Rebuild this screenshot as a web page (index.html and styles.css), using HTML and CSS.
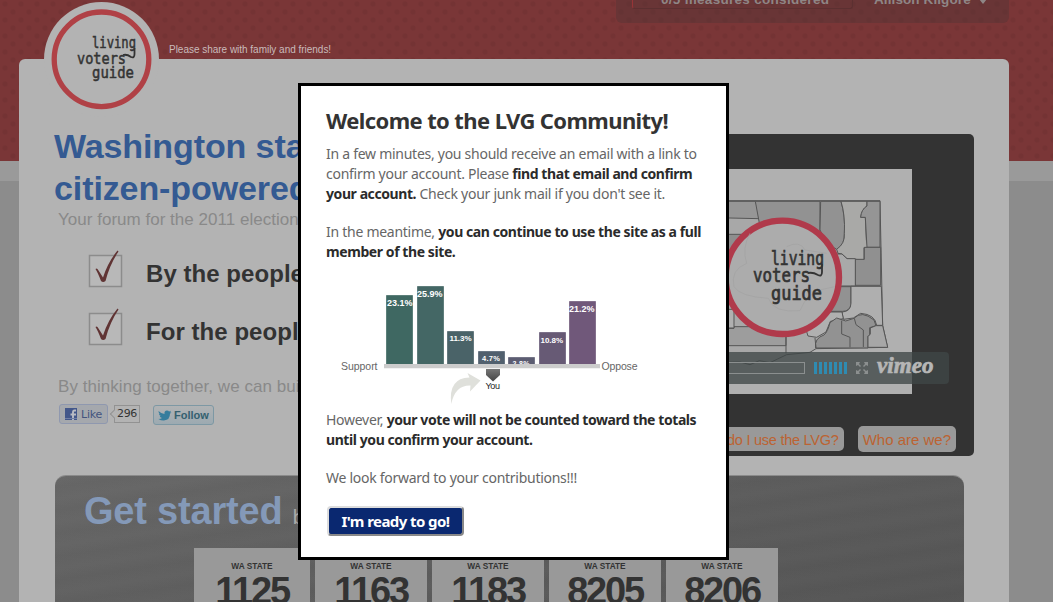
FILE: index.html
```
<!DOCTYPE html>
<html lang="en">
<head>
<meta charset="utf-8">
<title>Living Voters Guide</title>
<link rel="stylesheet" href="styles.css">
</head>
<body>
<div class="page">
  <header class="top">
    <p class="share">Please share with family and friends!</p>
    <div class="account">
      <span class="progress">0/5 measures considered</span>
      <span class="user">Allison Kilgore<svg width="8" height="6" viewBox="0 0 8 6"><path d="M0 0h8L4 5z" fill="#8f8686"/></svg></span>
    </div>
  </header>

  <main class="sheet">
    <div class="intro">
      <section class="pitch">
        <h1>Washington state's<br>citizen-powered guide</h1>
        <p class="sub">Your forum for the 2011 elections</p>
        <ul class="points">
          <li><svg width="36" height="40" viewBox="0 0 36 40"><path d="M1.500 6.500h32v31h-32z" fill="#b8b8b8" stroke="#8c8c8c" stroke-width="1.500"/><path d="M7.500 20Q9 18.500 10.500 21.500L15 28.500Q20 13 29.500 1.500l1 1Q22 15 17.500 32q-2.500 2-4.500 0Q10 24 7.500 20z" fill="#603434"/></svg>By the people.</li>
          <li><svg width="36" height="40" viewBox="0 0 36 40"><path d="M1.500 6.500h32v31h-32z" fill="#b8b8b8" stroke="#8c8c8c" stroke-width="1.500"/><path d="M7.500 20Q9 18.500 10.500 21.500L15 28.500Q20 13 29.500 1.500l1 1Q22 15 17.500 32q-2.500 2-4.500 0Q10 24 7.500 20z" fill="#603434"/></svg>For the people.</li>
        </ul>
        <p class="together">By thinking together, we can build</p>
        <div class="social">
          <span class="like"><svg width="12" height="12" viewBox="0 0 12 12"><path d="M0 0h12v12H0z" fill="#43578a"/><path d="M11 2.500H9.500Q8 2.500 8 4.500V12M5.500 6.500H11" fill="none" stroke="#b9bcc4" stroke-width="1.900"/><path d="M0 10.500h12" stroke="#7180a6"/></svg>Like</span>
          <span class="count">296</span>
          <span class="follow"><svg width="14" height="11" viewBox="0 0 14 11"><path d="M.5 1Q3.500 4 6.500 4 6 .5 9 .5q1.500 0 2 1l2-.7-1 1.700 1.500-.2-1.500 1.500Q12 10 6 10.500 3 10.700.5 9 3 9 4 8 2 7.500 1.800 6h1Q.8 5 1 3.500l.8.2Q.3 2.500.5 1z" fill="#367d9d"/></svg>Follow</span>
        </div>
      </section>

      <section class="video">
        <svg class="frame" width="372" height="225" viewBox="540 169 372 225">
          <path d="M540 169h372v225H540z" fill="#b0b0b0"/>
          <g transform="translate(720 180) scale(.33333)" stroke="#555" stroke-width="3" stroke-linejoin="round">
            <path d="M-60 62L480 62 488 436 503 502 288 506 270 517 200 524 150 548 118 542 90 554 60 546-60 548z" fill="#a8a8a8"/>
            <path d="M-60 64H106L121 104 116 116-60 112z" fill="#969696"/>
            <path d="M106 64H300V230H200L120 140z" fill="#929292"/>
            <path d="M302 64H363Q377 110 373 165 374 194 350 208L320 190 300 150z" fill="#929292"/>
            <path d="M363 64H441V78Q425 88 422 112H436L439 180 444 202 432 203V240L381 236 366 222 354 220 350 208Q376 190 373 160 376 105 363 64z" fill="#a9a9a7"/>
            <path d="M441 64H480V202H441L436 112H422Q424 88 441 78z" fill="#959595"/>
            <path d="M433 202H482V316H406V238H433z" fill="#909090"/>
            <path d="M350 222H366L381 236H406V318H350z" fill="#a9a9a9"/>
            <path d="M-30 163H80V240H-30z" fill="#8e8e8e"/>
            <path d="M340 320H393V375Q388 394 368 394H330z" fill="#929292"/>
            <path d="M393 319H484L488 436H470Q465 403 422 400L400 414 370 418 366 396Q392 395 393 370z" fill="#afafaf"/>
            <path d="M366 396H290L260 455 264 468 290 472 318 456 331 424 370 416z" fill="#b0b0b0"/>
            <path d="M287 504Q282 475 312 465 323 456 330 428L350 414 377 423 402 415Q425 390 462 420L468 437 449 443V468H444V504z" fill="#929292"/>
            <path d="M365 422V462L390 472V502M403 415L408 434 430 450V501" fill="none"/>
            <path d="M468 437H488L503 502H444V470L451 462V444z" fill="#a7a7a7"/>
            <path d="M42 440H198V497H-60V445H42zM198 440V520M288 504L285 474" fill="#9d9d9d"/>
            <path d="M0 388H42V444H0z" fill="#b0b0b0"/>
            <circle cx="187" cy="292" r="170" fill="#acacac" stroke="#b03a4b" stroke-width="19"/>
            <path d="M90 160Q65 205 80 250 30 270 42 320 60 350 145 355 160 400 240 392 260 330 345 320M200 200Q240 180 255 210L320 220" fill="none" stroke="#a2a2a2" stroke-width="2"/>
          </g>
          <g class="wordmark large">
            <text x="771" y="265" font-size="19" textLength="53" lengthAdjust="spacingAndGlyphs">living</text>
            <text x="753" y="282" font-size="19" textLength="57" lengthAdjust="spacingAndGlyphs">voters</text>
            <text x="771" y="300" font-size="19" textLength="51" lengthAdjust="spacingAndGlyphs">guide</text>
            <path d="M822 264v8q0 5-4 3-5-3-10-2"/>
          </g>
        </svg>
        <div class="player">
          <span class="track"></span>
          <span class="volume"></span>
          <svg width="12" height="12" viewBox="0 0 12 12"><path d="M0 0h4L3 2l2 2-1 1-2-2-2 1zM12 0v4l-2-1-2 2-1-1 2-2-1-2zM0 12V8l2 1 2-2 1 1-2 2 1 2zM12 12H8l1-2-2-2 1-1 2 2 2-1z" fill="#8b8f8f"/></svg>
          <span class="vimeo">vimeo</span>
        </div>
        <nav class="asks"><a class="how">How do I use the LVG?</a><a class="who">Who are we?</a></nav>
      </section>
    </div>

    <section class="start">
      <h2>Get started <small>by choosing a measure</small></h2>
      <div class="measures">
        <div class="measure"><span>WA STATE</span><b>1125</b></div>
        <div class="measure"><span>WA STATE</span><b>1163</b></div>
        <div class="measure"><span>WA STATE</span><b>1183</b></div>
        <div class="measure"><span>WA STATE</span><b>8205</b></div>
        <div class="measure"><span>WA STATE</span><b>8206</b></div>
      </div>
    </section>
  </main>

  <svg class="logo" width="116" height="116" viewBox="43 1 116 116">
    <circle cx="101.500" cy="59.500" r="57.500" fill="#b3b3b3"/>
    <circle cx="101.500" cy="59.300" r="47.300" fill="#b3b3b3" stroke="#b04146" stroke-width="5.300"/>
    <g class="wordmark">
      <text x="92" y="48" font-size="16" textLength="44" lengthAdjust="spacingAndGlyphs">living</text>
      <text x="77" y="63.500" font-size="16" textLength="49" lengthAdjust="spacingAndGlyphs">voters</text>
      <text x="92" y="78" font-size="16" textLength="42" lengthAdjust="spacingAndGlyphs">guide</text>
      <path d="M134.500 48v6q0 4.500-3.500 3-4-3-8-2"/>
    </g>
  </svg>

  <div class="dialog" role="dialog">
    <h3>Welcome to the LVG Community!</h3>
    <p>In a few minutes, you should receive an email with a link to<br>confirm your account. Please <b>find that email and confirm</b><br><b>your account.</b> Check your junk mail if you don't see it.</p>
    <p>In the meantime, <b>you can continue to use the site as a full</b><br><b>member of the site.</b></p>
    <svg class="chart" width="375" height="148" viewBox="326 262 375 148">
      <defs>
        <linearGradient id="pin" x2="0" y2="1"><stop stop-color="#777"/><stop offset="1" stop-color="#444"/></linearGradient>
      </defs>
      <g stroke-width="1">
        <path d="M386.500 364V295.500h26V364" fill="#3f6862" stroke="#5b7f79"/>
        <path d="M417.500 364V286.500h26V364" fill="#446765" stroke="#5f7d7b"/>
        <path d="M447.500 364V331.500h26V364" fill="#4a6368" stroke="#65797e"/>
        <path d="M478.500 364V351.500h26V364" fill="#51606e" stroke="#6a7784"/>
        <path d="M508.500 364V357.500h26V364" fill="#5c5d72" stroke="#747587"/>
        <path d="M539.500 364V332.500h26V364" fill="#675a75" stroke="#7c718a"/>
        <path d="M569.500 364V301.500h26V364" fill="#70587a" stroke="#84708c"/>
      </g>
      <g class="values">
        <text x="387" y="306" textLength="25.500">23.1%</text>
        <text x="417" y="297.300" textLength="25.500">25.9%</text>
        <text x="449.500" y="341.300" font-size="8" textLength="22">11.3%</text>
        <text x="482" y="361.300" font-size="7.500" textLength="18">4.7%</text>
        <text x="512.500" y="366" font-size="7" textLength="17">2.8%</text>
        <text x="540.500" y="342.800" font-size="8" textLength="22.500">10.8%</text>
        <text x="569" y="311.800" textLength="25.500">21.2%</text>
      </g>
      <path d="M384 364h216v4.300H384z" fill="#ccc"/>
      <g class="poles"><text x="341" y="370" textLength="36.500">Support</text><text x="601.500" y="370" textLength="36">Oppose</text></g>
      <path d="M486 369h14v6l-7 6.500-7-6.500z" fill="url(#pin)"/>
      <text class="you" x="485.500" y="389.300" textLength="14.500">You</text>
      <path d="M451.300 404Q448 378 469.500 377.500L467.500 373 480.500 380.500 470 391.500 470.500 385.500Q455 385 451.300 404z" fill="#dfe0db"/>
    </svg>
    <p>However, <b>your vote will not be counted toward the totals</b><br><b>until you confirm your account.</b></p>
    <p>We look forward to your contributions!!!</p>
    <button class="go">I'm ready to go!</button>
  </div>
</div>
</body>
</html>
```
FILE: styles.css
```
* { box-sizing: border-box; }
body { margin: 0; font-family: "Liberation Sans", Arial, sans-serif; }
h1, h2, h3, p, ul { margin: 0; padding: 0; font-size: inherit; }
svg { display: block; flex: none; }

.page {
  position: relative;
  width: 1053px;
  height: 602px;
  overflow: hidden;
  background: linear-gradient(#9a9a9a, #9a9a9a) 0 161px / 100% 20px no-repeat, #8c8c8c;
}
.page::before {
  content: "";
  position: absolute;
  inset: 0 0 auto;
  height: 161px;
  background:
    radial-gradient(circle at 5px 4px, #743334 2px, transparent 3.200px) 0 0 / 16px 16px,
    radial-gradient(circle at 13px 12px, #743334 2px, transparent 3.200px) 0 0 / 16px 16px,
    #7a3637;
}

.top {
  position: relative;
  display: flex;
  justify-content: space-between;
  height: 59px;
  padding: 0 44px 0 169px;
}
.share { padding-top: 43px; font-size: 10px; line-height: 13px; letter-spacing: -.02px; color: #c9bbbb; white-space: nowrap; }
.account {
  display: flex;
  gap: 21px;
  width: 393px;
  height: 23px;
  padding-left: 16px;
  border-radius: 0 0 6px 6px;
  background: rgba(80, 52, 53, .42);
  font-size: 13.500px;
  font-weight: bold;
  color: #8f8686;
  white-space: nowrap;
}
.progress { width: 221px; height: 9px; padding-left: 28px; border: solid #5c3031; border-width: 0 1px 1px; border-left-color: #973437; border-radius: 0 0 3px 3px; letter-spacing: .3px; }
.progress, .user { line-height: 0; }
.user { display: flex; gap: 8px; letter-spacing: .1px; }
.user svg { margin-top: -1px; }

.sheet {
  position: relative;
  width: 990px;
  height: 560px;
  margin-left: 19px;
  padding: 66px 35px 0;
  border-radius: 6px 6px 0 0;
  background: #b3b3b3;
}
.intro { display: flex; height: 350px; }
.pitch { width: 425px; white-space: nowrap; }
h1 { font-size: 34px; line-height: 42px; color: #345a92; letter-spacing: -.1px; }
.sub, .together { padding-left: 4px; font-size: 17px; line-height: 20px; color: #898989; }
.sub { padding-top: 1px; letter-spacing: .02px; }
.points { display: grid; gap: 18px; margin-top: 19px; list-style: none; }
.points li { display: flex; gap: 22px; height: 40px; padding-left: 34px; font-size: 24px; font-weight: bold; line-height: 49px; letter-spacing: .05px; color: #333; }
.together { margin-top: 30px; letter-spacing: .05px; }
.social { display: flex; margin: 7px 0 0 5px; font: 11px/19px "DejaVu Sans", sans-serif; }
.like { display: flex; align-items: center; gap: 4px; width: 49px; height: 20px; padding-left: 5px; border: 1px solid #8f98af; border-radius: 3px; background: #a5a8ad; color: #43547e; letter-spacing: -.2px; }
.count { position: relative; width: 26px; height: 18px; margin: 1px 0 0 6px; border: 1px solid #929292; background: #b3b3b3; color: #333; font-size: 11px; line-height: 16px; text-align: center; letter-spacing: -.3px; }
.count::before { content: ""; position: absolute; left: -4px; top: 5px; width: 5px; height: 5px; border: solid #929292; border-width: 0 0 1px 1px; background: #b3b3b3; transform: rotate(45deg); }
.follow { display: flex; align-items: center; gap: 2px; width: 61px; height: 20px; margin: 1px 0 0 13px; padding-left: 4px; border: 1px solid #7d98a4; border-radius: 3px; background: linear-gradient(#b1b3b4, #9caab1); font: bold 11px/18px "Liberation Sans", sans-serif; color: #34606f; }

.video { position: relative; width: 495px; height: 322px; margin-top: 9px; padding: 35px 0 0 61px; border-radius: 5px; background: #333; }
.player {
  position: absolute;
  left: 61px;
  top: 218px;
  display: flex;
  align-items: center;
  width: 409px;
  height: 32px;
  border-radius: 0 4px 4px 0;
  background: rgba(63, 70, 71, .78);
}
.track { width: 265px; height: 12px; border: 1px solid #8b8f8f; }
.volume { width: 34px; height: 12px; margin: 0 8px 0 9px; background: repeating-linear-gradient(90deg, #2f8bb1 0 3px, transparent 3px 5px); }
.vimeo { margin: -5px 0 0 9px; font: italic bold 23px/24px "Liberation Serif", serif; letter-spacing: .1px; color: #b6b6b6; -webkit-text-stroke: .7px #b6b6b6; }
.asks { display: flex; align-items: center; justify-content: flex-end; gap: 14px; height: 26px; margin: 32px 18px 0 0; font-size: 15px; color: #bc6332; white-space: nowrap; }
.asks a { height: 26px; padding: 0 5px; border-radius: 5px; background: #999; line-height: 28px; }
.asks .how { height: 24px; line-height: 26px; font-size: 14.500px; letter-spacing: -.25px; }

.start {
  width: 909px;
  height: 200px;
  margin-left: 1px;
  padding: 13px 0 0 29px;
  border-top: 1px solid #8b8b8b;
  border-radius: 11px 11px 0 0;
  background:
    repeating-linear-gradient(172deg, rgba(255,255,255,.008) 0, rgba(0,0,0,.018) 11px, rgba(255,255,255,.008) 23px),
    linear-gradient(165deg, #686868 0, #5d5d5d 45%, #525252);
}
h2 { height: 59px; font-size: 38px; line-height: 45px; letter-spacing: -.2px; color: #8499b8; white-space: nowrap; }
h2 small { font-size: 20px; font-weight: normal; color: #aaa; }
.measures { display: grid; grid-template-columns: 116px repeat(4, 112px); gap: 5px; margin-left: 110px; }
.measure { display: grid; justify-items: center; align-content: start; height: 120px; padding-top: 13px; background: #999; color: #333; }
.measure span { font-size: 8.300px; font-weight: bold; line-height: 10px; }
.measure b { font-size: 38px; line-height: 41px; letter-spacing: -2.200px; }

.logo { position: absolute; left: 43px; top: 1px; }
.wordmark { font-family: "DejaVu Sans Mono", monospace; fill: #333; stroke: #333; stroke-width: .5px; }
.wordmark path { fill: none; stroke-width: 1.800px; }
.wordmark.large { stroke-width: .7px; }

.dialog {
  position: absolute;
  left: 298px;
  top: 83px;
  width: 431px;
  height: 477px;
  padding: 20px 0 0 25px;
  border: 3px solid #000;
  background: #fff;
  font: 14px/20px "Noto Sans", sans-serif;
  letter-spacing: -.27px;
  color: #666;
  white-space: nowrap;
}
.dialog h3 { margin-bottom: 8px; font-size: 22px; line-height: 28px; padding-bottom: 2px; letter-spacing: -.6px; color: #333; }
.dialog p { margin-bottom: 18px; }
.dialog p b { letter-spacing: -.42px; color: #2b2b2b; }
.dialog .chart { margin: -18px 0 0; letter-spacing: 0; }
.values { font: bold 9px "Liberation Sans", sans-serif; fill: #fff; }
.poles { font: 10.500px "Liberation Sans", sans-serif; fill: #666; }
.you { font: 9px "Liberation Sans", sans-serif; fill: #222; }
.go {
  display: block;
  width: 137px;
  height: 30px;
  margin: 0 0 0 1px;
  padding: 0;
  border: 2px outset #ddd;
  border-radius: 4px;
  background: #0a2870;
  color: #fff;
  font: bold 15px/24px "Noto Sans", sans-serif;
  letter-spacing: -.58px;
}
```
